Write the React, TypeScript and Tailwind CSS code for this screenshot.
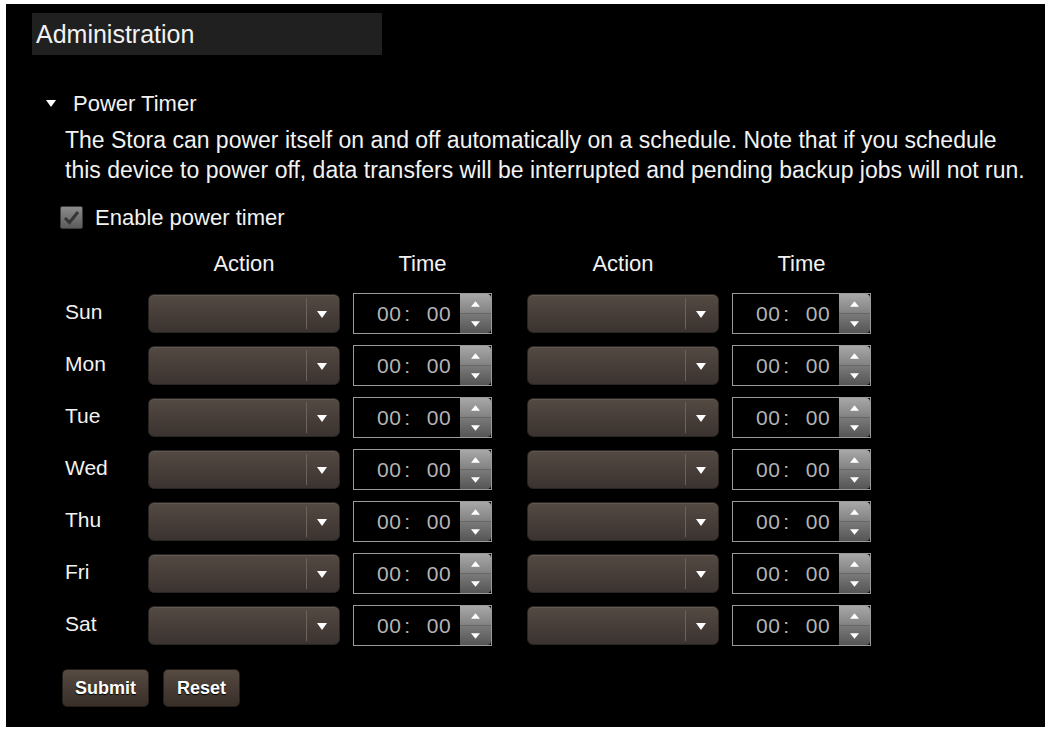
const days = ['Sun', 'Mon', 'Tue', 'Wed', 'Thu', 'Fri', 'Sat'];

function DownTri({ className = '' }: { className?: string }) {
  return (
    <svg width="10" height="7" viewBox="0 0 10 7" className={className}>
      <path d="M0 0 L10 0 L5 7 Z" fill="#fff" />
    </svg>
  );
}

function ActionSelect() {
  return (
    <div className="relative w-[192px] h-[39px] rounded-[6px] bg-gradient-to-b from-[#544a43] to-[#3b3330] border border-[#2a2522] shadow-[inset_0_1px_0_rgba(255,255,255,0.08)]">
      <div className="absolute right-[32px] top-[3px] bottom-[3px] w-px bg-[#6e635b]" />
      <DownTri className="absolute right-[12px] top-[16px]" />
    </div>
  );
}

function TimeInput() {
  return (
    <div className="flex w-[139px] h-[41px] border border-[#9a9a9a] bg-black">
      <div className="flex-1 flex items-center pl-[23px] text-[21px] text-[#b4b4b4] tracking-[0.5px]">
        <span>00</span>
        <span className="ml-[3px]">:</span>
        <span className="ml-[16px]">00</span>
      </div>
      <div className="w-[31px] flex flex-col rounded-r-[4px] overflow-hidden">
        <div className="flex-1 flex items-center justify-center bg-gradient-to-b from-[#a8a8a8] to-[#828282] border-b border-[#666]">
          <svg width="9" height="6" viewBox="0 0 10 6">
            <path d="M0 6 L10 6 L5 0 Z" fill="#fff" />
          </svg>
        </div>
        <div className="flex-1 flex items-center justify-center bg-gradient-to-b from-[#7a7a7a] to-[#555]">
          <svg width="9" height="6" viewBox="0 0 10 6">
            <path d="M0 0 L10 0 L5 6 Z" fill="#fff" />
          </svg>
        </div>
      </div>
    </div>
  );
}

function Btn({ label, w }: { label: string; w: string }) {
  return (
    <button
      className={`${w} h-[38px] rounded-[5px] bg-gradient-to-b from-[#564a41] to-[#382f29] border border-[#241f1b] text-white font-bold text-[18px] [text-shadow:0_1px_1px_#000]`}
    >
      {label}
    </button>
  );
}

export default function App() {
  return (
    <div className="w-[1048px] h-[731px] bg-white pt-[4px] pl-[6px] overflow-hidden">
      <div className="w-[1039px] h-[723px] bg-black text-[#f2f2f2] font-['Liberation_Sans',Arial,sans-serif]">
        <div className="ml-[26px] pt-[9px]">
          <div className="w-[350px] h-[42px] bg-[#202020] flex items-center pl-[4px] text-[25px] leading-none">
            Administration
          </div>
        </div>

        <div className="ml-[40px] mt-[35px] h-[26px] flex items-center text-[22px]">
          <DownTri />
          <span className="ml-[17px]">Power Timer</span>
        </div>

        <p className="ml-[59px] mt-[9px] text-[23px] leading-[30px]">
          The Stora can power itself on and off automatically on a schedule. Note that if you schedule
          <br />
          this device to power off, data transfers will be interrupted and pending backup jobs will not run.
        </p>

        <label className="ml-[54px] mt-[20px] h-[24px] flex items-center text-[22px]">
          <span className="w-[23px] h-[23px] rounded-[2px] border border-[#3c3c3c] bg-gradient-to-b from-[#8c8c8c] to-[#5c5c5c] flex items-center justify-center">
            <svg width="17" height="15" viewBox="0 0 17 15">
              <path d="M2 8 L6.5 12.5 L15 2" fill="none" stroke="#353535" strokeWidth="3" />
            </svg>
          </span>
          <span className="ml-[12px]">Enable power timer</span>
        </label>

        <div className="ml-[59px] mt-[21px] h-[26px] flex items-center text-[22px]">
          <div className="w-[83px]" />
          <div className="w-[192px] text-center">Action</div>
          <div className="w-[139px] ml-[13px] text-center">Time</div>
          <div className="w-[192px] ml-[35px] text-center">Action</div>
          <div className="w-[139px] ml-[13px] text-center">Time</div>
        </div>

        <div className="ml-[59px] mt-[17px] flex flex-col gap-[11px]">
          {days.map((d) => (
            <div key={d} className="flex items-center h-[41px]">
              <div className="w-[83px] text-[21px] -mt-[4px]">{d}</div>
              <ActionSelect />
              <div className="ml-[13px]">
                <TimeInput />
              </div>
              <div className="ml-[35px]">
                <ActionSelect />
              </div>
              <div className="ml-[13px]">
                <TimeInput />
              </div>
            </div>
          ))}
        </div>

        <div className="ml-[56px] mt-[23px] flex gap-[14px]">
          <Btn label="Submit" w="w-[87px]" />
          <Btn label="Reset" w="w-[77px]" />
        </div>
      </div>
    </div>
  );
}
